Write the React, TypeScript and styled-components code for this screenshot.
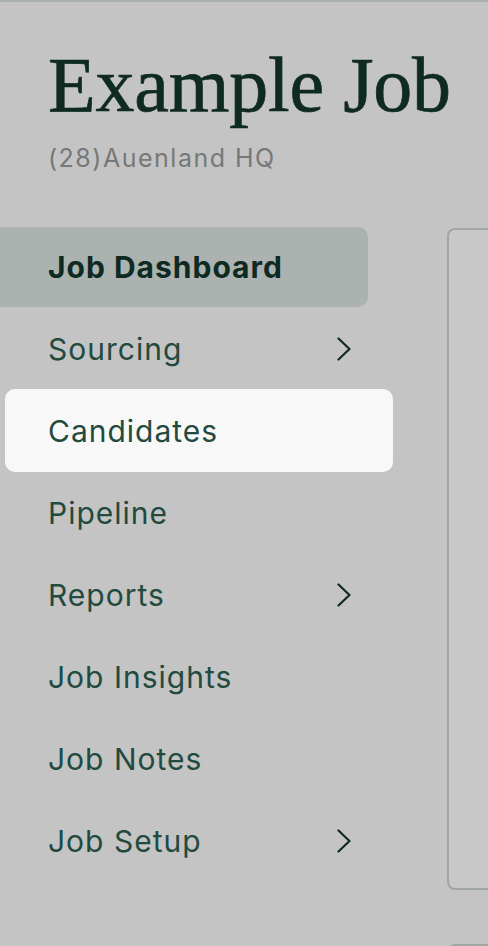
import React from 'react';
import styled, { createGlobalStyle } from 'styled-components';

const GlobalStyle = createGlobalStyle`
  html, body {
    margin: 0;
    padding: 0;
    background: #c4c4c4;
  }
  body {
    font-family: Inter, "Liberation Sans", sans-serif;
  }
`;

const Page = styled.div`
  width: 488px;
  height: 946px;
  overflow: hidden;
  display: flex;
  flex-direction: column;
  border-top: 2px solid #a9b0ad;
  box-sizing: border-box;
`;

const Header = styled.header`
  flex-shrink: 0;
  padding: 38px 0 0 48px;
  height: 225px;
  box-sizing: border-box;
`;

const Title = styled.h1`
  margin: 0;
  font-family: "Liberation Serif", "DejaVu Serif", serif;
  font-weight: 400;
  font-size: 78px;
  line-height: 90px;
  color: #0f2a22;
  letter-spacing: -0.2px;
  -webkit-text-stroke: 0.7px #0f2a22;
`;

const Location = styled.div`
  margin-top: 14px;
  font-size: 25px;
  line-height: 28px;
  letter-spacing: 1.5px;
  color: #767877;
`;

const Main = styled.div`
  display: grid;
  grid-template-columns: 447px 1fr;
  flex: 1;
  min-height: 0;
`;

const Nav = styled.nav`
  display: flex;
  flex-direction: column;
  gap: 2px;
`;

const NavItem = styled.div<{ $active?: boolean; $spotlight?: boolean }>`
  display: flex;
  align-items: center;
  justify-content: space-between;
  box-sizing: border-box;
  height: ${(p) => (p.$spotlight ? '83px' : '80px')};
  width: ${(p) => (p.$spotlight ? '388px' : '368px')};
  margin: ${(p) => (p.$spotlight ? '-2px 0 -1px 5px' : '0')};
  padding: ${(p) => (p.$spotlight ? '0 17px 0 43px' : '0 17px 0 48px')};
  border-radius: ${(p) => (p.$spotlight ? '10px' : '0 10px 10px 0')};
  background: ${(p) => (p.$active ? '#abb2af' : p.$spotlight ? '#f8f8f8' : 'transparent')};
  color: ${(p) => (p.$active ? '#0f2a22' : '#224a3e')};
  font-size: 30px;
  font-weight: ${(p) => (p.$active ? 700 : 400)};
  letter-spacing: 1px;
`;

const Chevron = styled.svg`
  width: 14px;
  height: 24px;
  flex-shrink: 0;
`;

const Side = styled.div`
  display: flex;
  flex-direction: column;
  gap: 54px;
  padding-top: 1px;
`;

const Panel = styled.div<{ $height: number }>`
  flex-shrink: 0;
  height: ${(p) => p.$height}px;
  margin-right: -20px;
  box-sizing: border-box;
  border: 2px solid #a0a7a4;
  border-right: none;
  border-radius: 8px 0 0 8px;
  background: #c8c8c8;
`;

const ChevronIcon = () => (
  <Chevron viewBox="0 0 14 24" fill="none">
    <path d="M1.5 1.5 L12.5 12 L1.5 22.5" stroke="#0f2a22" strokeWidth="2.2" strokeLinecap="round" strokeLinejoin="round" />
  </Chevron>
);

const items: { label: string; sub?: boolean; active?: boolean; spotlight?: boolean }[] = [
  { label: 'Job Dashboard', active: true },
  { label: 'Sourcing', sub: true },
  { label: 'Candidates', spotlight: true },
  { label: 'Pipeline' },
  { label: 'Reports', sub: true },
  { label: 'Job Insights' },
  { label: 'Job Notes' },
  { label: 'Job Setup', sub: true },
];

const App: React.FC = () => {
  return (
    <>
      <GlobalStyle />
      <Page>
        <Header>
          <Title>Example Job</Title>
          <Location>(28)Auenland HQ</Location>
        </Header>
        <Main>
          <Nav>
            {items.map((item) => (
              <NavItem key={item.label} $active={item.active} $spotlight={item.spotlight}>
                <span>{item.label}</span>
                {item.sub && <ChevronIcon />}
              </NavItem>
            ))}
          </Nav>
          <Side>
            <Panel $height={662} />
            <Panel $height={200} />
          </Side>
        </Main>
      </Page>
    </>
  );
};

export default App;
